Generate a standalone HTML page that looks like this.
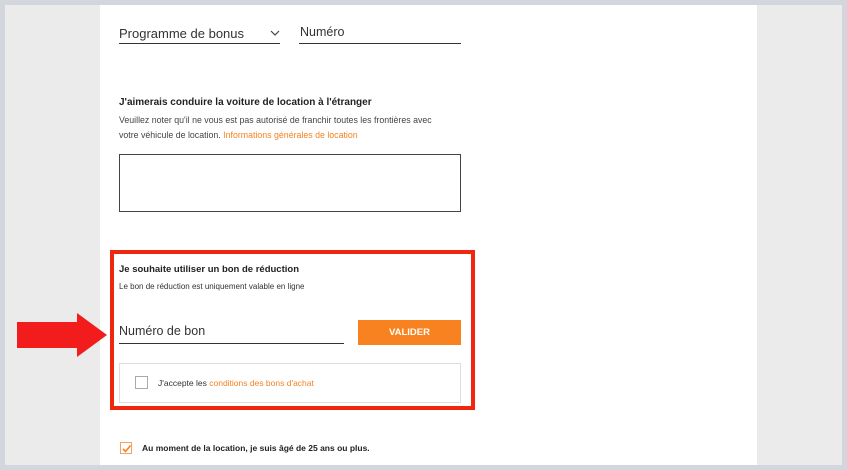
<!DOCTYPE html>
<html><head><meta charset="utf-8"><style>
*{margin:0;padding:0;box-sizing:border-box}
body{width:847px;height:470px;background:#d3d6dd;position:relative;overflow:hidden;font-family:"Liberation Sans",Arial,sans-serif;color:#222}
.a{position:absolute}
</style></head><body>
<div class="a" style="left:5px;top:5px;width:837px;height:460px;background:#ebebeb"></div>
<div class="a" style="left:100px;top:5px;width:657px;height:460px;background:#fff"></div>

<div class="a" style="left:119px;top:26px;font-size:13px;color:#333">Programme de bonus</div>
<svg class="a" style="left:270px;top:30px" width="10" height="6"><path d="M1 1L5 5L9 1" stroke="#444" fill="none" stroke-width="1.2"/></svg>
<div class="a" style="left:119px;top:43px;width:161px;height:1px;background:#333"></div>
<div class="a" style="left:300px;top:25px;font-size:12.5px;color:#333">Numéro</div>
<div class="a" style="left:299px;top:43px;width:162px;height:1px;background:#333"></div>

<div class="a" style="left:119px;top:97px;font-size:10px;font-weight:bold;color:#222">J'aimerais conduire la voiture de location à l'étranger</div>
<div class="a" style="left:119px;top:113px;font-size:8.8px;color:#444;line-height:15px;white-space:nowrap">Veuillez noter qu'il ne vous est pas autorisé de franchir toutes les frontières avec<br>votre véhicule de location. <span style="color:#f5821f">Informations générales de location</span></div>
<div class="a" style="left:119px;top:154px;width:342px;height:58px;border:1px solid #444"></div>

<div class="a" style="left:110px;top:250px;width:365px;height:160px;border:4px solid #f0260f"></div>
<div class="a" style="left:119px;top:264px;font-size:9.5px;font-weight:bold;color:#222">Je souhaite utiliser un bon de réduction</div>
<div class="a" style="left:119px;top:282px;font-size:8px;color:#333">Le bon de réduction est uniquement valable en ligne</div>
<div class="a" style="left:119px;top:324px;font-size:12.5px;color:#333">Numéro de bon</div>
<div class="a" style="left:119px;top:343px;width:225px;height:1px;background:#333"></div>
<div class="a" style="left:358px;top:320px;width:103px;height:25px;background:#f7821f;color:#fff;font-size:9.5px;font-weight:bold;text-align:center;line-height:25px">VALIDER</div>
<div class="a" style="left:119px;top:363px;width:342px;height:40px;border:1px solid #ddd"></div>
<div class="a" style="left:135px;top:376px;width:13px;height:13px;border:1px solid #aaa"></div>
<div class="a" style="left:158px;top:378px;font-size:8.5px;color:#333">J'accepte les <span style="color:#f5821f">conditions des bons d'achat</span></div>

<svg class="a" style="left:17px;top:312px" width="92" height="46"><path d="M0 10H60V1L90 23L60 45V36H0Z" fill="#f21c1c"/></svg>

<div class="a" style="left:120px;top:442px;width:12px;height:12px;border:1px solid #f7a060"></div>
<svg class="a" style="left:121px;top:443px" width="11" height="11"><path d="M2 6L4.5 8.5L9.5 2.5" stroke="#f5821f" stroke-width="1.6" fill="none"/></svg>
<div class="a" style="left:142px;top:443px;font-size:8.5px;font-weight:bold;color:#222">Au moment de la location, je suis âgé de 25 ans ou plus.</div>
</body></html>
